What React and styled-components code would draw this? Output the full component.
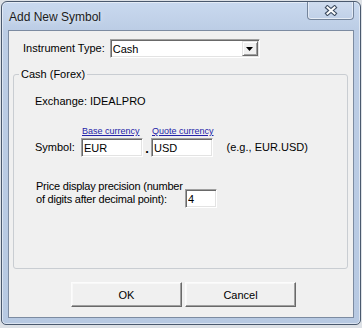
import React from 'react';
import styled, { createGlobalStyle } from 'styled-components';

const Global = createGlobalStyle`
  html, body { margin: 0; padding: 0; }
  body {
    background: #dde1e6;
    font-family: "Liberation Sans", Arial, sans-serif;
    font-size: 11px;
    color: #000;
  }
`;

const Window = styled.div`
  box-sizing: border-box;
  margin: 1px 0 0 1px;
  width: 360px;
  height: 324px;
  border: 1px solid #4a596e;
  border-radius: 6px 6px 5px 5px;
  background: linear-gradient(180deg, #c9d9ef 0px, #bccde5 28px, #b7c9e2 100%);
  box-shadow: inset 0 0 0 1px rgba(255, 255, 255, 0.5);
  padding: 0 6px 6px;
  display: flex;
  flex-direction: column;
`;

const TitleBar = styled.div`
  height: 28px;
  display: flex;
  align-items: center;
  padding-left: 1px;
`;

const Title = styled.div`
  font-size: 12px;
  line-height: 14px;
  padding-top: 2px;
  color: #1b1b1b;
  text-shadow: 0 0 6px rgba(255, 255, 255, 0.8);
`;

const CloseButton = styled.div`
  box-sizing: border-box;
  margin-left: auto;
  align-self: flex-start;
  width: 47px;
  height: 18px;
  border: 1px solid #74849b;
  border-top: none;
  border-radius: 0 0 4px 4px;
  background: linear-gradient(180deg, #cfdcef, #c0d0e8);
  box-shadow: inset 0 -1px 0 rgba(255, 255, 255, 0.6), inset 1px 0 0 rgba(255, 255, 255, 0.5), inset -1px 0 0 rgba(255, 255, 255, 0.5);
  display: flex;
  align-items: center;
  justify-content: center;
`;

const Client = styled.div`
  box-sizing: border-box;
  flex: 1;
  border: 1px solid #7c8ba1;
  background: #f0f0f0;
  padding: 8px 0 10px;
  display: flex;
  flex-direction: column;
`;

const TypeRow = styled.div`
  display: flex;
  align-items: center;
  padding-left: 14px;
  gap: 5px;
  height: 19px;
`;

const Label = styled.span`
  line-height: 13px;
  white-space: nowrap;
`;

const Sunken = `
  box-sizing: border-box;
  border-style: solid;
  border-width: 1px;
  border-color: #a0a0a0 #ffffff #ffffff #a0a0a0;
  box-shadow: inset 1px 1px 0 #696969, inset -1px -1px 0 #e3e3e3;
  background: #fff;
`;

const Combo = styled.div`
  ${Sunken}
  width: 150px;
  height: 19px;
  display: flex;
  align-items: stretch;
`;

const ComboText = styled.div`
  flex: 1;
  padding: 2px 0 0 2px;
  line-height: 14px;
`;

const DropButton = styled.div`
  box-sizing: border-box;
  width: 16px;
  margin: 1px 1px 1px 0;
  background: #f0f0f0;
  border-style: solid;
  border-width: 1px;
  border-color: #e3e3e3 #696969 #696969 #e3e3e3;
  box-shadow: inset 1px 1px 0 #fff, inset -1px -1px 0 #a0a0a0;
  display: flex;
  align-items: center;
  justify-content: center;
`;

const Group = styled.fieldset`
  flex: 1;
  min-width: 0;
  margin: 10px 5px 0 4px;
  padding: 0;
  border: 1px solid #c9cdd2;
  border-radius: 3px;
`;

const Legend = styled.legend`
  margin-left: 5px;
  padding: 0 2px;
  line-height: 13px;
`;

const GroupBody = styled.div`
  display: flex;
  flex-direction: column;
  padding: 14px 0 0 21px;
`;

const SymbolRow = styled.div`
  display: flex;
  align-items: flex-end;
  margin-top: 18px;
`;

const RowLabel = styled.span`
  width: ${p => p.$w}px;
  line-height: 13px;
  margin-bottom: ${p => p.$mb || 3}px;
  letter-spacing: ${p => p.$ls || 0}px;
  white-space: nowrap;
`;

const FieldColumn = styled.div`
  display: flex;
  flex-direction: column;
`;

const Caption = styled.span`
  font-size: 9px;
  line-height: 11px;
  color: #2323a8;
  text-decoration: underline;
  margin-bottom: 1px;
  padding-left: ${p => p.$pl || 1}px;
  white-space: nowrap;
`;

const TextBox = styled.input`
  ${Sunken}
  width: ${p => p.$w}px;
  height: 19px;
  margin: 0;
  padding: 1px 0 0 2px;
  font-family: "Liberation Sans", Arial, sans-serif;
  font-size: 11px;
  color: #000;
  outline: none;
  border-radius: 0;
`;

const Dot = styled.span`
  width: 8px;
  text-align: center;
  font-size: 13px;
  font-weight: bold;
  line-height: 13px;
  margin-bottom: 2px;
`;

const Hint = styled.span`
  margin-left: 13px;
  line-height: 13px;
  margin-bottom: 3px;
`;

const PriceRow = styled.div`
  display: flex;
  align-items: flex-end;
  margin-top: 23px;
  padding-left: 1px;
`;

const ButtonRow = styled.div`
  display: flex;
  gap: 3px;
  padding-left: 62px;
  margin-top: 13px;
`;

const Button = styled.button`
  box-sizing: border-box;
  width: 111px;
  height: 25px;
  margin: 0;
  padding: 0;
  background: #f0f0f0;
  border-style: solid;
  border-width: 1px;
  border-color: #fcfcfc #696969 #696969 #fcfcfc;
  box-shadow: inset -1px -1px 0 #a0a0a0, inset 1px 1px 0 #f8f8f8;
  font-family: "Liberation Sans", Arial, sans-serif;
  font-size: 11px;
  color: #000;
`;

export default function App() {
  return (
    <>
      <Global />
      <Window>
        <TitleBar>
          <Title>Add New Symbol</Title>
          <CloseButton>
            <svg width="14" height="11" viewBox="-7 -5.5 14 11">
              <path d="M-3.5 -3 L3.5 3 M3.5 -3 L-3.5 3" stroke="#3c4b60" strokeWidth="4.2" strokeLinecap="square" fill="none" />
              <path d="M-3.5 -3 L3.5 3 M3.5 -3 L-3.5 3" stroke="#ffffff" strokeWidth="2" strokeLinecap="square" fill="none" />
            </svg>
          </CloseButton>
        </TitleBar>
        <Client>
          <TypeRow>
            <Label>Instrument Type:</Label>
            <Combo>
              <ComboText>Cash</ComboText>
              <DropButton>
                <svg width="7" height="4" viewBox="0 0 7 4">
                  <path d="M0 0 H7 L3.5 4 Z" fill="#000" />
                </svg>
              </DropButton>
            </Combo>
          </TypeRow>
          <Group>
            <Legend>Cash (Forex)</Legend>
            <GroupBody>
              <Label>Exchange: IDEALPRO</Label>
              <SymbolRow>
                <RowLabel $w={46}>Symbol:</RowLabel>
                <FieldColumn>
                  <Caption $pl={1}>Base currency</Caption>
                  <TextBox $w={62} defaultValue="EUR" readOnly />
                </FieldColumn>
                <Dot>.</Dot>
                <FieldColumn>
                  <Caption $pl={1}>Quote currency</Caption>
                  <TextBox $w={62} defaultValue="USD" readOnly />
                </FieldColumn>
                <Hint>(e.g., EUR.USD)</Hint>
              </SymbolRow>
              <PriceRow>
                <RowLabel $w={149} $mb={2} $ls={-0.22}>
                  Price display precision (number
                  <br />
                  of digits after decimal point):
                </RowLabel>
                <TextBox $w={32} defaultValue="4" readOnly />
              </PriceRow>
            </GroupBody>
          </Group>
          <ButtonRow>
            <Button>OK</Button>
            <Button>Cancel</Button>
          </ButtonRow>
        </Client>
      </Window>
    </>
  );
}
